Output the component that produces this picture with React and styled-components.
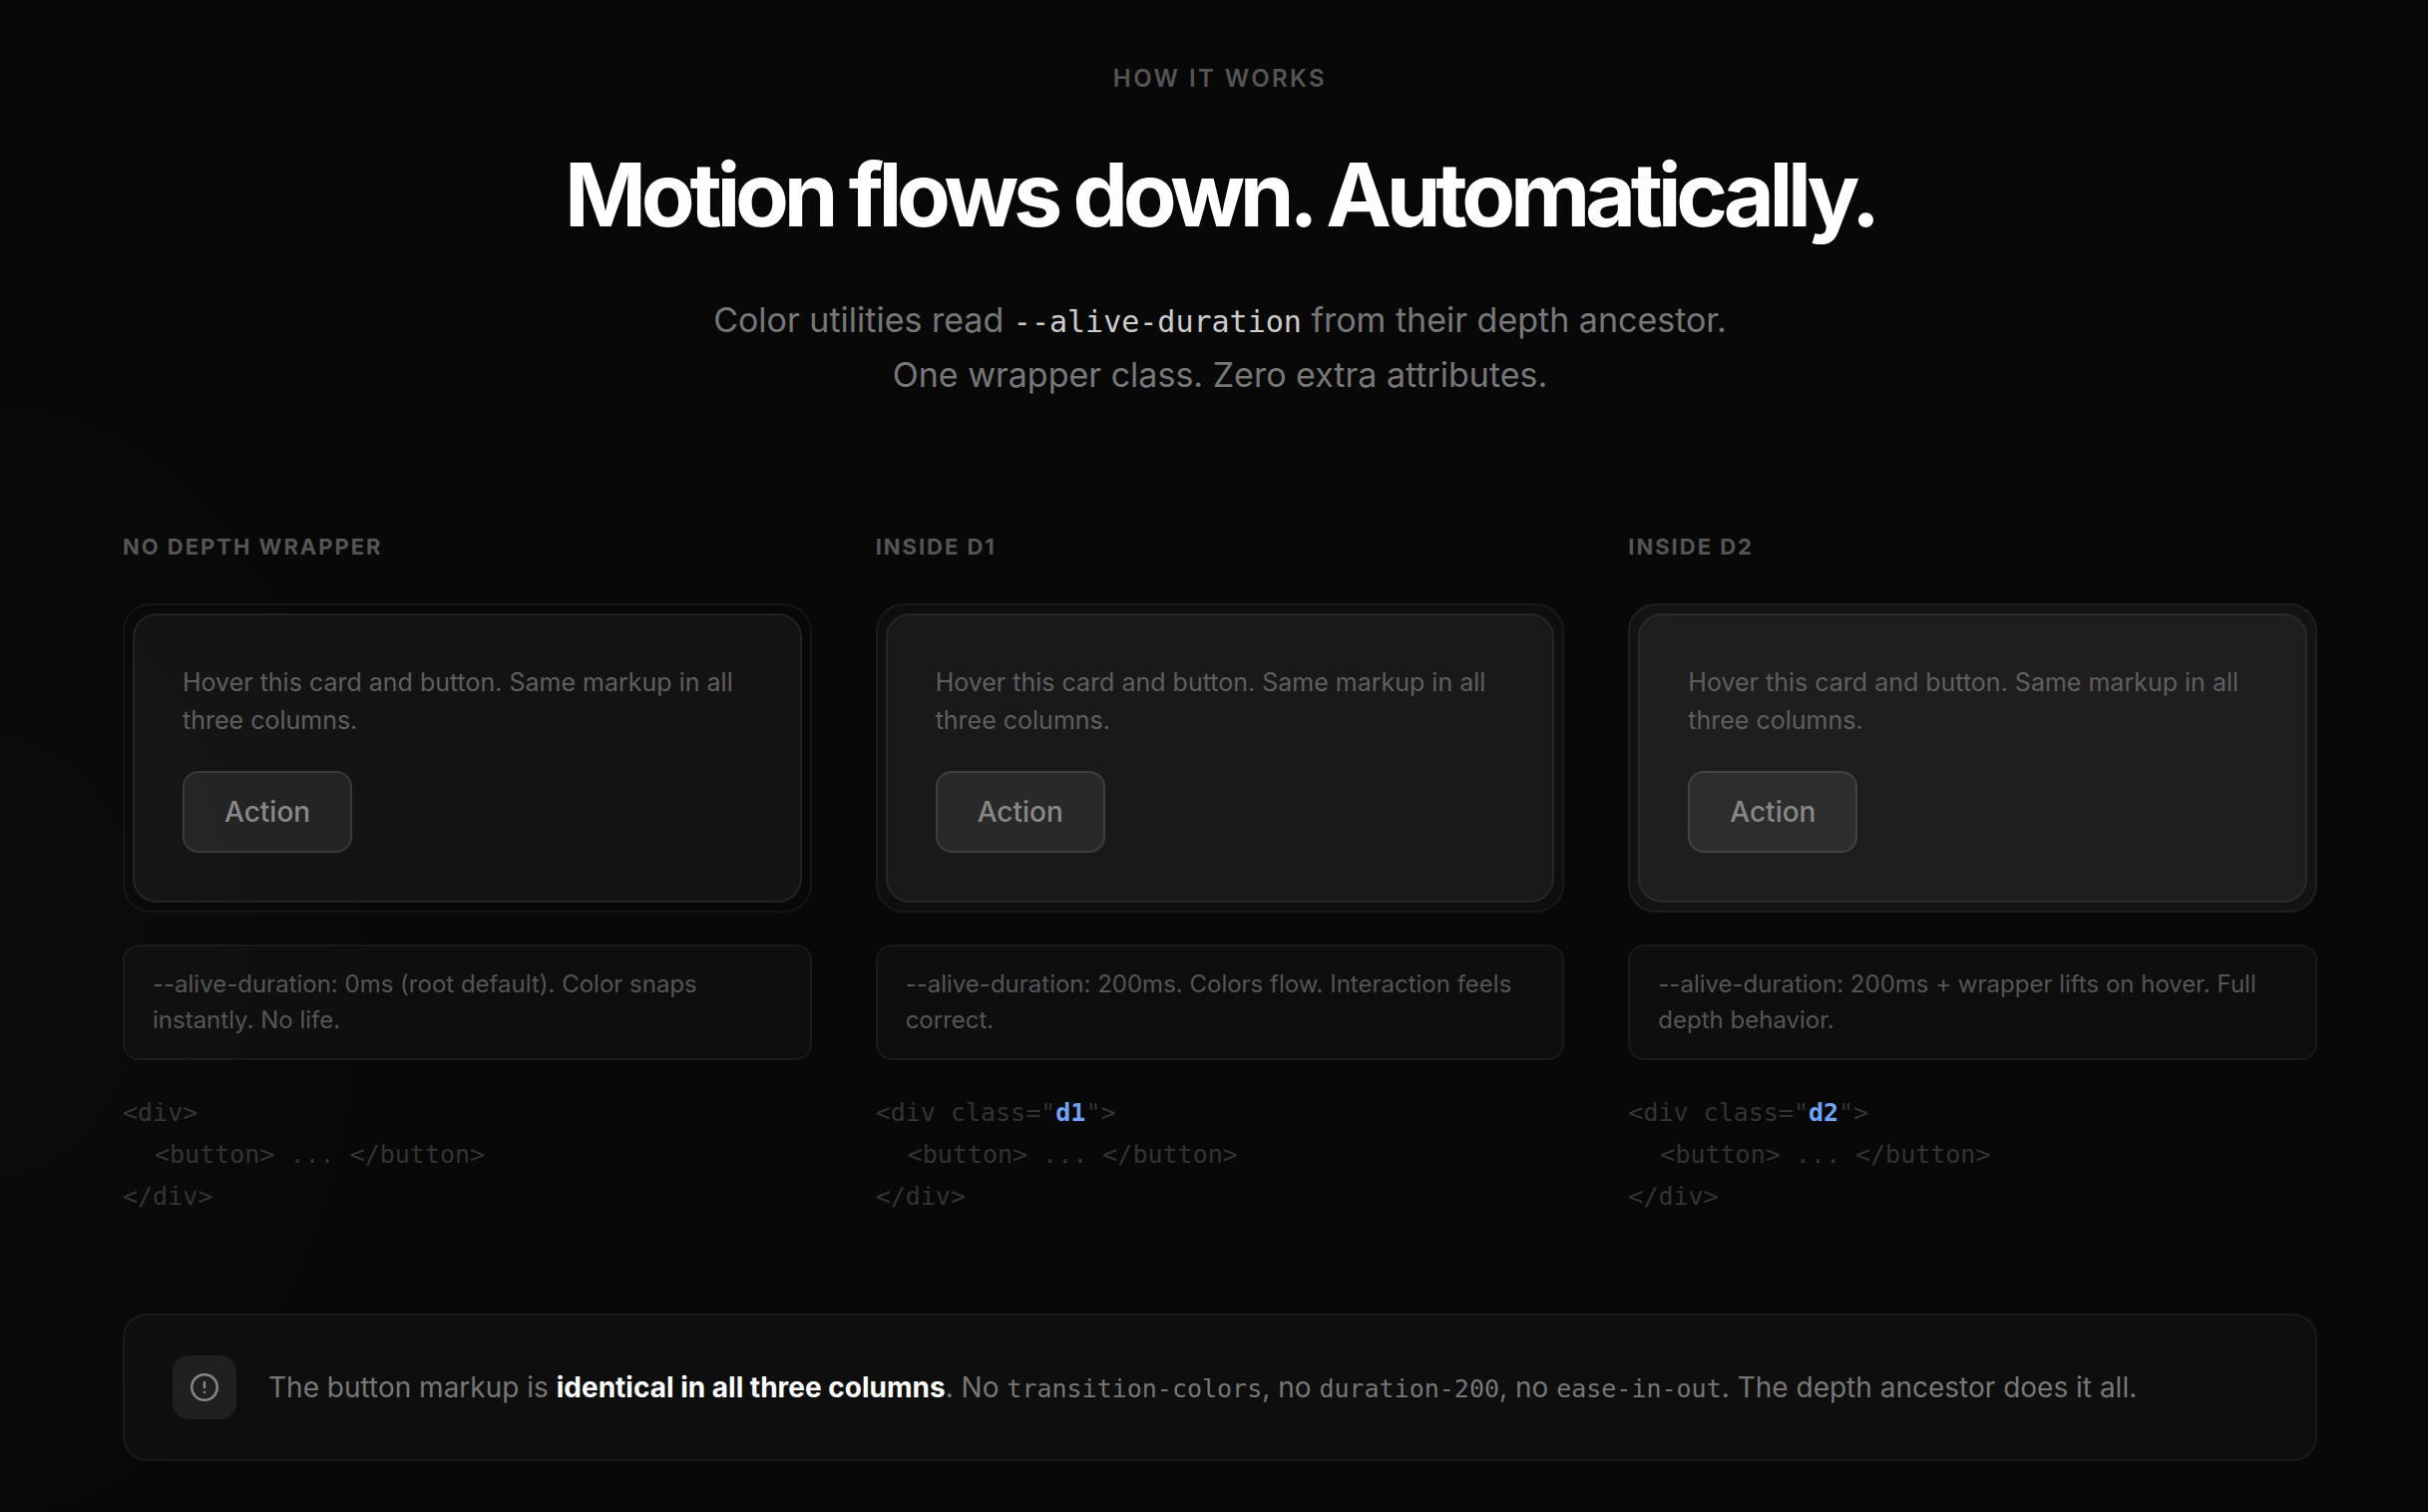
import React from "react";
import styled, { createGlobalStyle } from "styled-components";

const sans = `Inter, "Liberation Sans", sans-serif`;
const mono = `"DejaVu Sans Mono", "Liberation Mono", monospace`;

const GlobalStyle = createGlobalStyle`
  *, *::before, *::after {
    box-sizing: border-box;
  }
  body {
    margin: 0;
    background: #080808;
    color: #fff;
    font-family: ${sans};
    -webkit-font-smoothing: antialiased;
  }
`;

const Section = styled.section`
  position: relative;
  min-height: 100vh;
  padding: 61px 111px 51px 123px;
  /* faint glow, washes over the cards too */
  &::after {
    content: "";
    position: absolute;
    inset: 0;
    pointer-events: none;
    background: radial-gradient(ellipse 420px 640px at 0 960px, rgba(255, 255, 255, 0.014), transparent);
  }
  @media screen and (max-width: 1100px) {
    padding: 60px 32px;
  }
`;

const Header = styled.header`
  display: flex;
  flex-direction: column;
  align-items: center;
  text-align: center;
`;

const Eyebrow = styled.p`
  margin: 0;
  font-size: 24px;
  line-height: 36px;
  font-weight: 600;
  letter-spacing: 0.1em;
  text-transform: uppercase;
  color: #555;
`;

const Title = styled.h2`
  margin: 50px 0 0;
  font-size: 88px;
  line-height: 96px;
  font-weight: 700;
  letter-spacing: -0.06em;
`;

const Lead = styled.p`
  margin: 50px 0 0;
  font-size: 34px;
  line-height: 55px;
  color: #777;
`;

const LeadCode = styled.code`
  font-family: ${mono};
  font-size: 30px;
  line-height: 1;
  color: #ccc;
`;

const Columns = styled.div`
  display: grid;
  grid-template-columns: repeat(3, 1fr);
  gap: 64px;
  margin-top: 128px;
  @media screen and (max-width: 1100px) {
    grid-template-columns: 1fr;
  }
`;

const Column = styled.div`
  display: flex;
  flex-direction: column;
`;

const ColumnLabel = styled.h3`
  margin: 0 0 40px;
  font-size: 22px;
  line-height: 34px;
  font-weight: 700;
  letter-spacing: 0.09em;
  text-transform: uppercase;
  color: #555;
`;

const Wrapper = styled.div`
  padding: 8px;
  border: 2px solid ${({ $border }) => $border};
  border-radius: 28px;
  background: ${({ $fill }) => $fill};
`;

const Card = styled.div`
  padding: 48px;
  border: 2px solid ${({ $border }) => $border};
  border-radius: 24px;
  background: ${({ $fill }) => $fill};
`;

const CardText = styled.p`
  margin: 0 0 32px;
  font-size: 25px;
  line-height: 38px;
  color: #5f5f5f;
`;

const ActionButton = styled.button`
  display: block;
  padding: 22px 40px;
  border: 2px solid rgba(255, 255, 255, 0.1);
  border-radius: 16px;
  background: rgba(255, 255, 255, 0.07);
  color: #888;
  font-family: inherit;
  font-size: 28px;
  line-height: 34px;
  font-weight: 500;
  cursor: pointer;
  transition: ${({ $duration }) => $duration}ms ease-in-out;
  &:hover {
    background: rgba(255, 255, 255, 0.14);
    color: #fff;
  }
`;

const Note = styled.p`
  margin: 32px 0 0;
  padding: 20px 28px;
  border: 2px solid #1a1a1a;
  border-radius: 16px;
  background: #0e0e0e;
  color: #555;
  font-size: 24px;
  line-height: 36px;
`;

const Snippet = styled.pre`
  margin: 32px 0 0;
  font-family: ${mono};
  font-size: 25px;
  line-height: 42px;
  color: #333;
`;

const Indent = styled.span`
  display: block;
  padding-left: 32px;
`;

const DepthName = styled.b`
  color: #6ea3f7;
`;

const Callout = styled.aside`
  display: flex;
  align-items: center;
  gap: 32px;
  margin-top: 96px;
  padding: 40px 48px;
  border: 2px solid #1a1a1a;
  border-radius: 24px;
  background: #0e0e0e;
`;

const IconTile = styled.div`
  display: flex;
  flex: none;
  align-items: center;
  justify-content: center;
  width: 64px;
  height: 64px;
  border-radius: 16px;
  background: #1f1f1f;
  color: #888;
`;

const CalloutText = styled.p`
  margin: 0;
  font-size: 28px;
  line-height: 44px;
  color: #777;
`;

const Strong = styled.strong`
  font-weight: 700;
  color: #fff;
`;

const Code = styled.code`
  font-family: ${mono};
  font-size: 25px;
  line-height: 1;
`;

const columns = [
  {
    label: "No depth wrapper",
    duration: 0,
    wrapper: { $border: "#151515", $fill: "transparent" },
    card: { $border: "#222", $fill: "#131313" },
    note: "--alive-duration: 0ms (root default). Color snaps instantly. No life.",
  },
  {
    label: "Inside d1",
    depth: "d1",
    duration: 200,
    wrapper: { $border: "#1a1a1a", $fill: "#0e0e0e" },
    card: { $border: "#262626", $fill: "#191919" },
    note: "--alive-duration: 200ms. Colors flow. Interaction feels correct.",
  },
  {
    label: "Inside d2",
    depth: "d2",
    duration: 200,
    wrapper: { $border: "#202020", $fill: "#131313" },
    card: { $border: "#2a2a2a", $fill: "#1e1e1e" },
    note: "--alive-duration: 200ms + wrapper lifts on hover. Full depth behavior.",
  },
];

const DepthColumn = ({ label, depth, duration, wrapper, card, note }) => (
  <Column>
    <ColumnLabel>{label}</ColumnLabel>
    <Wrapper {...wrapper}>
      <Card {...card}>
        <CardText>Hover this card and button. Same markup in all three columns.</CardText>
        <ActionButton type="button" $duration={duration}>
          Action
        </ActionButton>
      </Card>
    </Wrapper>
    <Note>{note}</Note>
    <Snippet>
      {depth ? (
        <>
          {'<div class="'}
          <DepthName>{depth}</DepthName>
          {'">'}
        </>
      ) : (
        "<div>"
      )}
      <Indent>{"<button> ... </button>"}</Indent>
      {"</div>"}
    </Snippet>
  </Column>
);

const App = () => {
  return (
    <>
      <GlobalStyle />
      <Section>
        <Header>
          <Eyebrow>How it works</Eyebrow>
          <Title>Motion flows down. Automatically.</Title>
          <Lead>
            Color utilities read <LeadCode>--alive-duration</LeadCode> from their depth ancestor.
            <br />
            One wrapper class. Zero extra attributes.
          </Lead>
        </Header>
        <Columns>
          {columns.map((column) => (
            <DepthColumn key={column.label} {...column} />
          ))}
        </Columns>
        <Callout>
          <IconTile>
            <svg width="28" height="28" viewBox="0 0 28 28" fill="none" stroke="currentColor" strokeWidth="2.5" aria-hidden="true">
              <circle cx="14" cy="14" r="12.75" />
              <path d="M14 9v5M14 19v.1" strokeLinecap="round" />
            </svg>
          </IconTile>
          <CalloutText>
            The button markup is <Strong>identical in all three columns</Strong>. No <Code>transition-colors</Code>, no{" "}
            <Code>duration-200</Code>, no <Code>ease-in-out</Code>. The depth ancestor does it all.
          </CalloutText>
        </Callout>
      </Section>
    </>
  );
};

export default App;
